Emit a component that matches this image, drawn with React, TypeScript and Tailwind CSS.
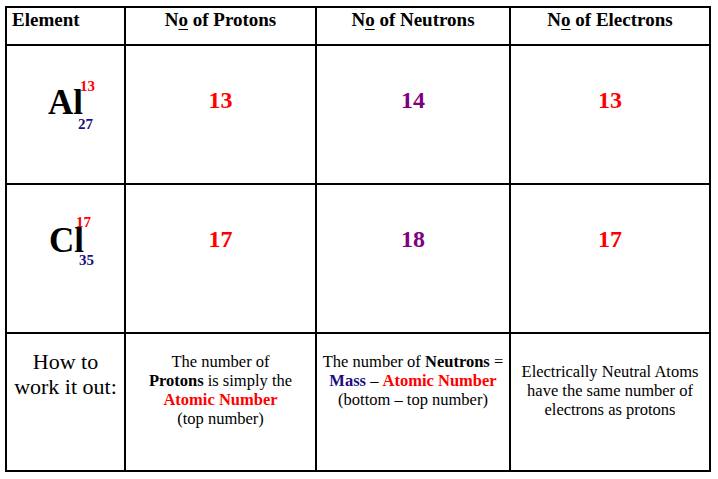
import React from "react";

function HeaderNo({ rest }: { rest: string }) {
  return (
    <div className="pt-[1px] text-center text-[19px] leading-[21px] font-bold text-black whitespace-nowrap">
      N<span className="underline underline-offset-[3px] decoration-[1px]">o</span> {rest}
    </div>
  );
}

function Num({ value, color }: { value: string; color: string }) {
  return (
    <div className={`pt-[40px] text-center text-[24px] leading-[28px] font-bold ${color}`}>{value}</div>
  );
}

export default function App() {
  return (
    <div className="w-[718px] h-[479px] bg-white pt-[6px] pl-[5px] [font-family:'Liberation_Serif','Times_New_Roman',serif]">
      <div className="grid w-[706px] grid-cols-[117px_189px_192px_198px] grid-rows-[36px_137px_147px_136px] gap-[2px] bg-black p-[2px]">
        {/* header */}
        <div className="bg-white pl-[5px] pt-[1px] text-[19px] leading-[21px] font-bold text-black">Element</div>
        <div className="bg-white">
          <HeaderNo rest="of Protons" />
        </div>
        <div className="bg-white">
          <HeaderNo rest="of Neutrons" />
        </div>
        <div className="bg-white">
          <HeaderNo rest="of Electrons" />
        </div>

        {/* Al */}
        <div className="relative bg-white pt-[45px] pl-[41px]">
          <div className="w-fit text-[35px] leading-[24px] font-bold text-black">Al</div>
          <span className="absolute left-[73px] top-[35px] text-[15px] leading-[10px] font-bold text-[#ff0000]">13</span>
          <span className="absolute left-[71px] top-[73px] text-[15px] leading-[10px] font-bold text-[#1a0d80]">27</span>
        </div>
        <div className="bg-white">
          <Num value="13" color="text-[#ff0000]" />
        </div>
        <div className="bg-white">
          <Num value="14" color="text-[#800080]" />
        </div>
        <div className="bg-white">
          <Num value="13" color="text-[#ff0000]" />
        </div>

        {/* Cl */}
        <div className="relative bg-white pt-[44px] pl-[42px]">
          <div className="w-fit text-[35px] leading-[24px] font-bold text-black">Cl</div>
          <span className="absolute left-[69px] top-[32px] text-[15px] leading-[10px] font-bold text-[#ff0000]">17</span>
          <span className="absolute left-[72px] top-[70px] text-[15px] leading-[10px] font-bold text-[#1a0d80]">35</span>
        </div>
        <div className="bg-white">
          <Num value="17" color="text-[#ff0000]" />
        </div>
        <div className="bg-white">
          <Num value="18" color="text-[#800080]" />
        </div>
        <div className="bg-white">
          <Num value="17" color="text-[#ff0000]" />
        </div>

        {/* how to */}
        <div className="bg-white pt-[15px] text-center text-[22px] leading-[25px] text-black">
          How to
          <br />
          work it out:
        </div>
        <div className="bg-white pt-[18px] text-center text-[16.5px] leading-[19px] text-black whitespace-nowrap">
          The number of
          <br />
          <b>Protons</b> is simply the
          <br />
          <b className="text-[#ff0000]">Atomic Number</b>
          <br />
          (top number)
        </div>
        <div className="bg-white pt-[18px] text-center text-[16.5px] leading-[19px] text-black whitespace-nowrap">
          The number of <b>Neutrons</b> =
          <br />
          <b className="text-[#1a0d80]">Mass</b> – <b className="text-[#ff0000]">Atomic Number</b>
          <br />
          (bottom – top number)
        </div>
        <div className="bg-white pt-[28px] text-center text-[16.5px] leading-[19px] text-black whitespace-nowrap">
          Electrically Neutral Atoms
          <br />
          have the same number of
          <br />
          electrons as protons
        </div>
      </div>
    </div>
  );
}
